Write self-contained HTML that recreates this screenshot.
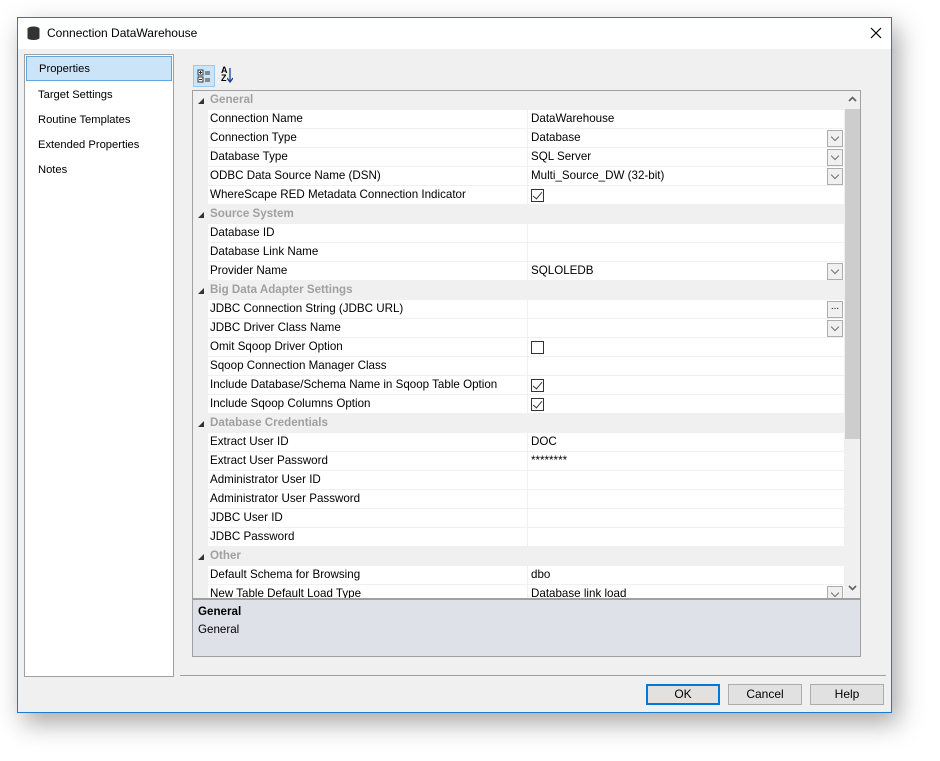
<!DOCTYPE html>
<html><head><meta charset="utf-8"><style>
*{box-sizing:border-box;margin:0;padding:0}
body{width:940px;height:761px;background:#fff;font-family:"Liberation Sans",sans-serif;font-size:11.6px;color:#000;position:relative;overflow:hidden}
.win{position:absolute;left:17px;top:17px;width:875px;height:696px;border:1px solid #1a7ad4;background:#f0f0f0;box-shadow:6px 10px 24px rgba(0,0,0,.35)}
.title{position:absolute;left:0;top:0;right:0;height:31px;background:#fff}
.title span{position:absolute;left:29px;top:8px;font-size:12px}
.ab{position:absolute}
.left{position:absolute;left:6px;top:36px;width:150px;height:623px;background:#fff;border:1px solid #a0a0a0}
.left div{height:25px;line-height:26px;padding-left:13px;font-size:11.2px}
.left .sel{margin:1px;height:25px;background:#cce4f7;border:1px solid #5fa7e0;padding-left:12px;line-height:24px}
.grid{position:absolute;left:174px;top:72px;width:669px;height:509px;border:1px solid #a0a0a0;background:#f0f0f0;overflow:hidden}
.row{position:relative;height:19px;line-height:18px}
.cat{color:#a0a0a0;font-weight:bold;padding-left:17px}
.cat:before{content:"";position:absolute;left:5px;top:7px;border-left:6px solid transparent;border-bottom:6px solid #333}
.p{margin-left:15px;background:#fff;border-bottom:1px solid #f0f0f0;width:636px}
.p .l{position:absolute;left:2px;top:0}
.p .v{position:absolute;left:319px;top:0;bottom:-1px;border-left:1px solid #f0f0f0;padding-left:3px;width:317px}
.dd{position:absolute;right:1px;top:1px;width:16px;height:17px;border:1px solid #adadad;background:#f0f0f0}
.dd:after{content:"";position:absolute;left:4px;top:3px;width:5px;height:5px;border-right:1px solid #707070;border-bottom:1px solid #707070;transform:rotate(45deg)}
.dots{position:absolute;right:1px;top:1px;width:16px;height:17px;border:1px solid #adadad;background:#f0f0f0;font-style:normal;font-size:10px;line-height:10px;text-align:center}
.cb{position:absolute;left:3px;top:3px;width:13px;height:13px;border:1px solid #333;background:#fff}
.cb.c:after{content:"";position:absolute;left:3px;top:0;width:4px;height:8px;border-right:1.5px solid #333;border-bottom:1.5px solid #333;transform:rotate(40deg)}
.sb{position:absolute;left:651px;top:0;width:17px;height:507px;background:#f0f0f0}
.btn{position:absolute;top:666px;width:74px;height:21px;border:1px solid #adadad;background:#e1e1e1;text-align:center;line-height:19px;font-size:12px}
</style></head><body>
<div class="win">
<div class="title">
<svg class="ab" style="left:9px;top:8px" width="13" height="14"><ellipse cx="6.5" cy="3" rx="6" ry="2.5" fill="#333"/><rect x="0.5" y="3" width="12" height="9" fill="#333"/><ellipse cx="6.5" cy="12" rx="6" ry="2" fill="#333"/></svg>
<span>Connection DataWarehouse</span>
<svg class="ab" style="left:852px;top:9px" width="12" height="12"><path d="M1 1L11 11M11 1L1 11" stroke="#000" stroke-width="1.2"/></svg>
</div>
<div class="left">
<div class="sel">Properties</div><div>Target Settings</div><div>Routine Templates</div><div>Extended Properties</div><div>Notes</div>
</div>
<div class="ab" style="left:175px;top:47px;width:22px;height:22px;background:#cce4f7;border:1px solid #99c9ef"></div>
<svg class="ab" style="left:179px;top:51px" width="14" height="14"><rect x="1" y="1" width="5" height="5" fill="#fff" stroke="#333"/><rect x="1" y="8" width="5" height="5" fill="#fff" stroke="#333"/><path d="M2 3.5h3M3.5 2v3M2 10.5h3M8 3h5M8 5h5M8 10h5M8 12h5" stroke="#333"/></svg>
<div class="ab" style="left:203px;top:48px;font-size:9px;line-height:8px;font-weight:bold">A<br>Z</div>
<svg class="ab" style="left:209px;top:50px" width="6" height="16"><path d="M3 0v13M0 10l3 4 3-4" stroke="#1a3f9a" fill="none" stroke-width="1.3"/></svg>
<div class="grid">
<div class="row cat">General</div>
<div class="row p"><span class="l">Connection Name</span><span class="v">DataWarehouse</span></div>
<div class="row p"><span class="l">Connection Type</span><span class="v">Database<i class="dd"></i></span></div>
<div class="row p"><span class="l">Database Type</span><span class="v">SQL Server<i class="dd"></i></span></div>
<div class="row p"><span class="l">ODBC Data Source Name (DSN)</span><span class="v">Multi_Source_DW (32-bit)<i class="dd"></i></span></div>
<div class="row p"><span class="l">WhereScape RED Metadata Connection Indicator</span><span class="v"><i class="cb c"></i></span></div>
<div class="row cat">Source System</div>
<div class="row p"><span class="l">Database ID</span><span class="v"></span></div>
<div class="row p"><span class="l">Database Link Name</span><span class="v"></span></div>
<div class="row p"><span class="l">Provider Name</span><span class="v">SQLOLEDB<i class="dd"></i></span></div>
<div class="row cat">Big Data Adapter Settings</div>
<div class="row p"><span class="l">JDBC Connection String (JDBC URL)</span><span class="v"><i class="dots">...</i></span></div>
<div class="row p"><span class="l">JDBC Driver Class Name</span><span class="v"><i class="dd"></i></span></div>
<div class="row p"><span class="l">Omit Sqoop Driver Option</span><span class="v"><i class="cb"></i></span></div>
<div class="row p"><span class="l">Sqoop Connection Manager Class</span><span class="v"></span></div>
<div class="row p"><span class="l">Include Database/Schema Name in Sqoop Table Option</span><span class="v"><i class="cb c"></i></span></div>
<div class="row p"><span class="l">Include Sqoop Columns Option</span><span class="v"><i class="cb c"></i></span></div>
<div class="row cat">Database Credentials</div>
<div class="row p"><span class="l">Extract User ID</span><span class="v">DOC</span></div>
<div class="row p"><span class="l">Extract User Password</span><span class="v">********</span></div>
<div class="row p"><span class="l">Administrator User ID</span><span class="v"></span></div>
<div class="row p"><span class="l">Administrator User Password</span><span class="v"></span></div>
<div class="row p"><span class="l">JDBC User ID</span><span class="v"></span></div>
<div class="row p"><span class="l">JDBC Password</span><span class="v"></span></div>
<div class="row cat">Other</div>
<div class="row p"><span class="l">Default Schema for Browsing</span><span class="v">dbo</span></div>
<div class="row p"><span class="l">New Table Default Load Type</span><span class="v">Database link load<i class="dd"></i></span></div>
<div class="sb">
<svg class="ab" style="left:4px;top:5px" width="9" height="6"><path d="M1 5l3.5-3.5L8 5" stroke="#606060" stroke-width="1.6" fill="none"/></svg>
<div class="ab" style="left:1px;top:18px;width:15px;height:330px;background:#cdcdcd"></div>
<svg class="ab" style="left:4px;top:494px" width="9" height="6"><path d="M1 1l3.5 3.5L8 1" stroke="#606060" stroke-width="1.6" fill="none"/></svg>
</div>
</div>
<div class="ab" style="left:174px;top:581px;width:669px;height:58px;background:#dfe1e8;border:1px solid #a0a0a0;padding:4px 5px">
<div style="font-weight:bold;line-height:15px">General</div><div style="line-height:15px;margin-top:3px">General</div></div>
<div class="ab" style="left:162px;top:657px;width:706px;height:1px;background:#a0a0a0"></div>
<div class="btn" style="left:628px;border:2px solid #0078d7;line-height:17px">OK</div>
<div class="btn" style="left:710px">Cancel</div>
<div class="btn" style="left:792px">Help</div>
</div>
</body></html>
